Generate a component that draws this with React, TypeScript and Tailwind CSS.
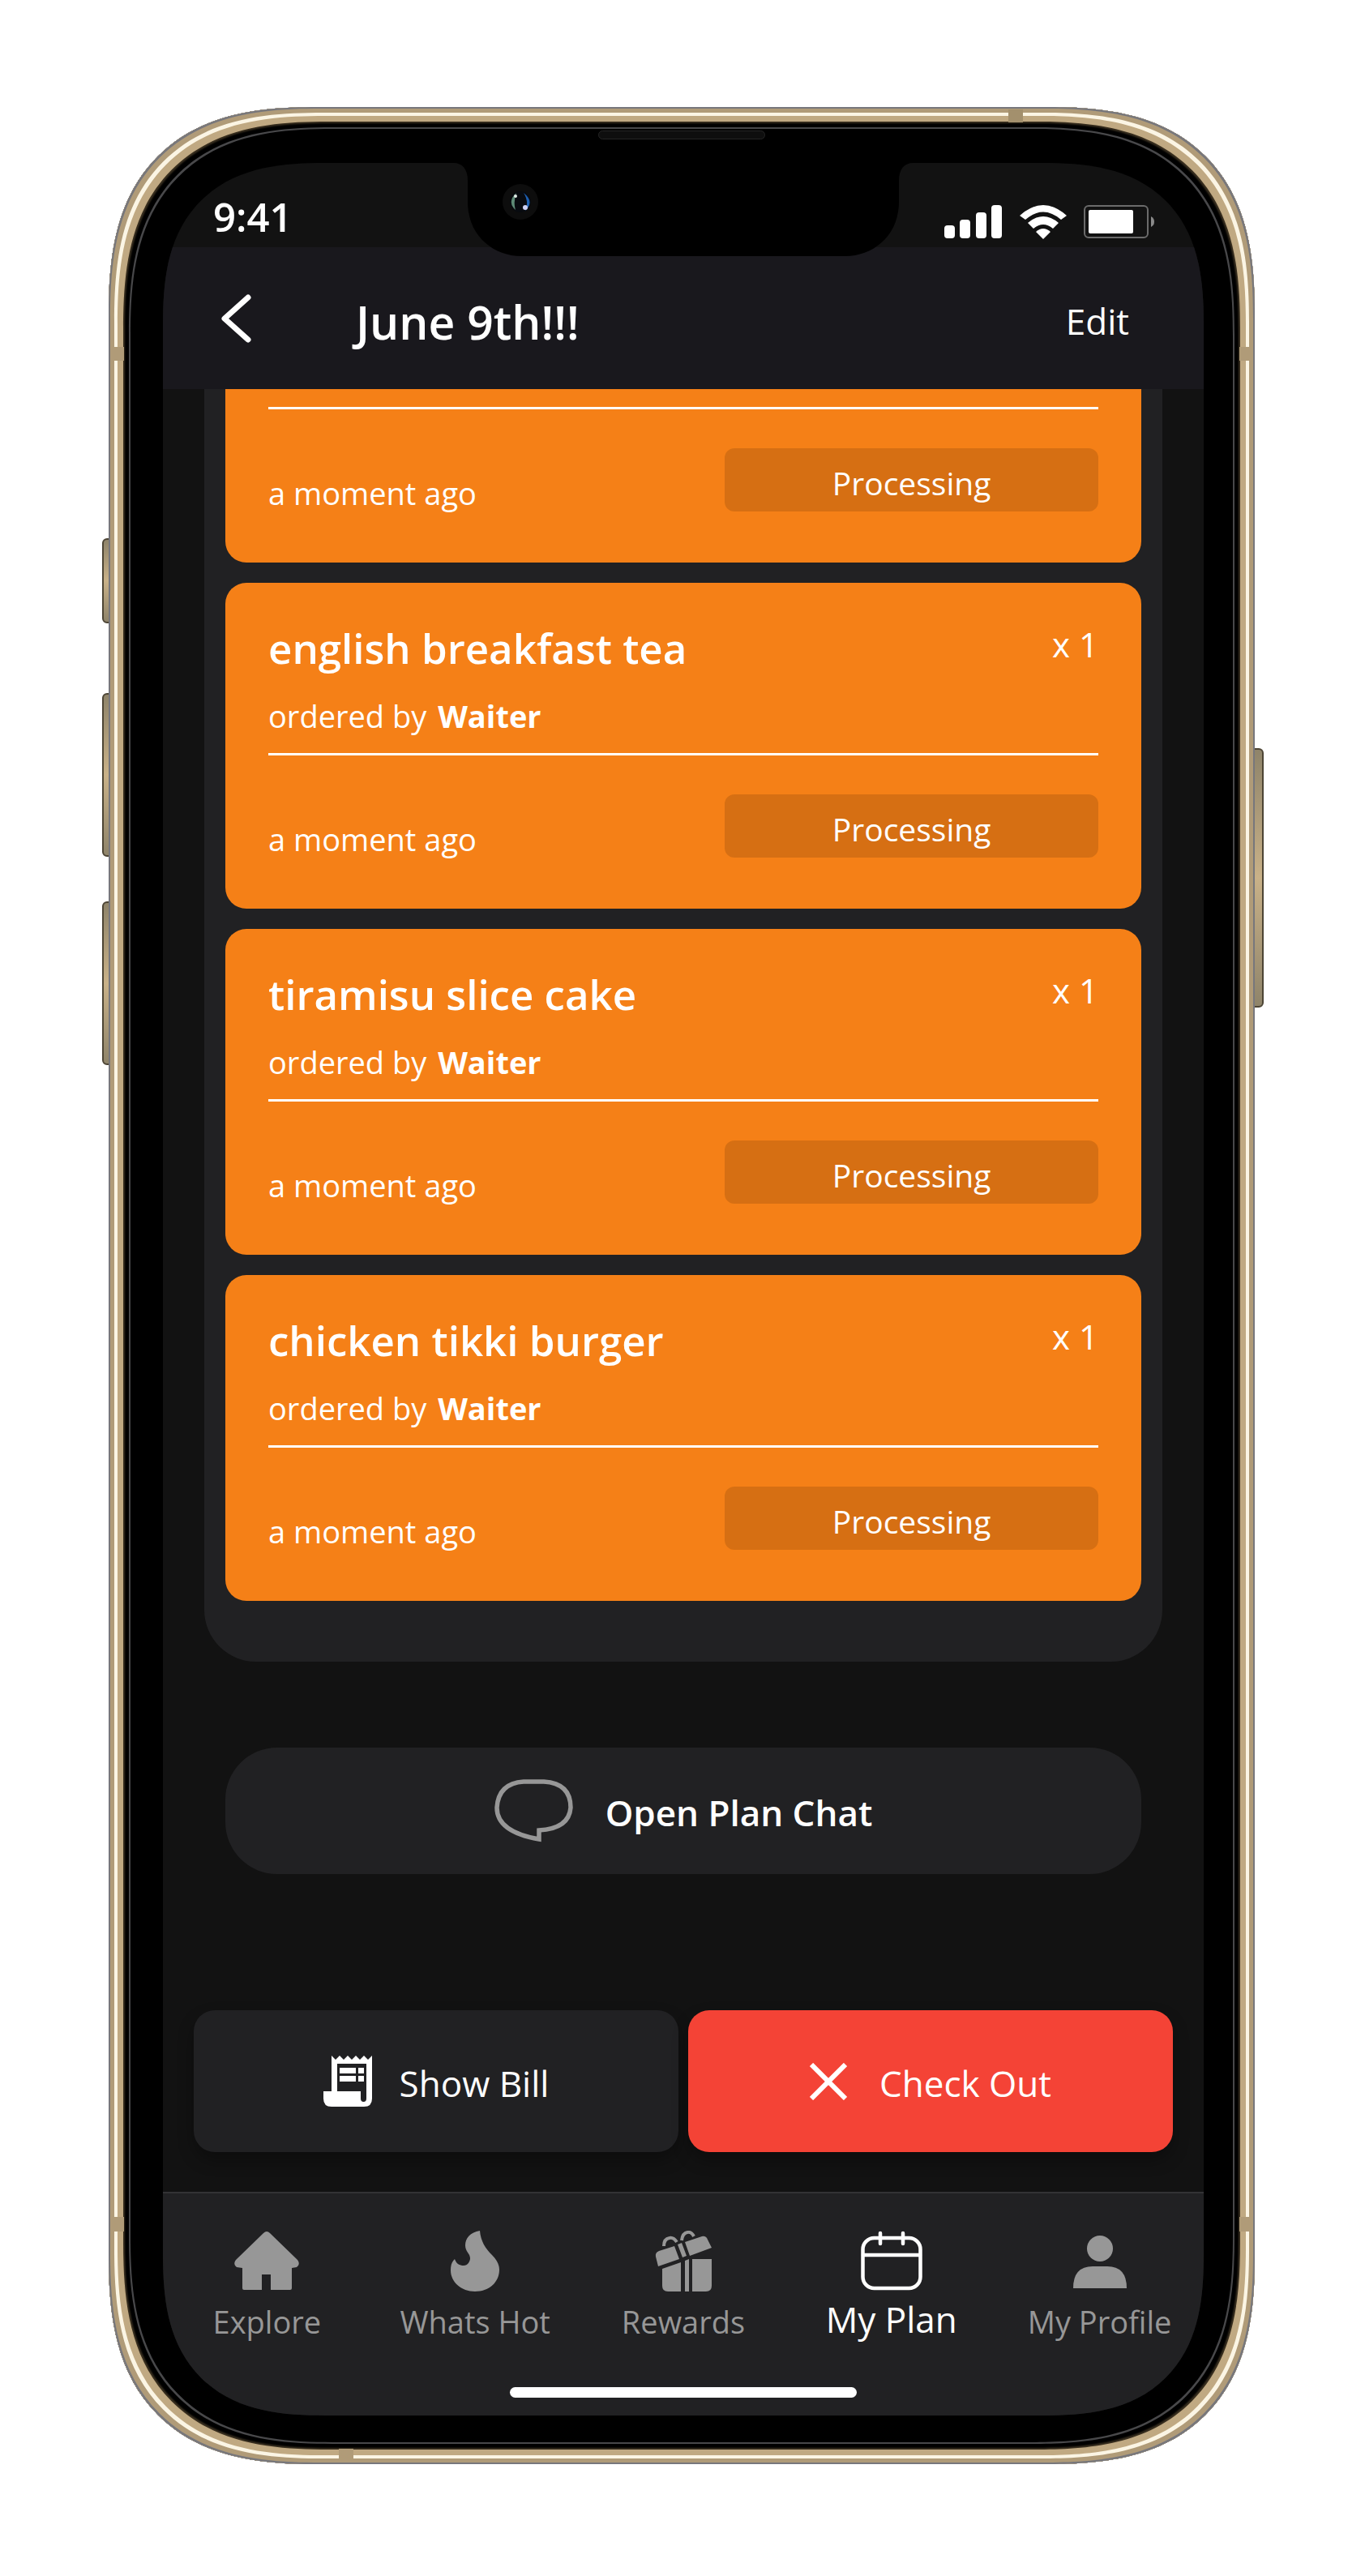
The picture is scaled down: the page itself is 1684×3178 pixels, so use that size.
import React from "react";

type Order = { name?: string; qty?: number; by?: string; time: string; status: string };

const orders: Order[] = [
  { time: "a moment ago", status: "Processing" },
  { name: "english breakfast tea", qty: 1, by: "Waiter", time: "a moment ago", status: "Processing" },
  { name: "tiramisu slice cake", qty: 1, by: "Waiter", time: "a moment ago", status: "Processing" },
  { name: "chicken tikki burger", qty: 1, by: "Waiter", time: "a moment ago", status: "Processing" },
];

function StatusIcons() {
  return (
    <svg width="260" height="44" viewBox="1165 252 260 44" aria-hidden="true">
      <g fill="#fff">
        <rect x="1165" y="278" width="13" height="16" rx="4" />
        <rect x="1184" y="271" width="13" height="23" rx="4" />
        <rect x="1204" y="262" width="13" height="32" rx="4" />
        <rect x="1223" y="253" width="13" height="41" rx="4" />
        <path d="M1258 266 Q1287 240 1316 266 L1309 271 Q1287 252 1265 271 Z" />
        <path d="M1268 275 Q1287 259 1306 275 L1299 282 Q1287 272 1275 282 Z" />
        <path d="M1278 286 Q1287 278 1296 286 L1287 295 Z" />
        <rect x="1343" y="259" width="55" height="29" rx="2" />
      </g>
      <rect x="1338" y="254" width="78" height="39" rx="5" fill="none" stroke="#6b6b6b" strokeWidth="2" />
      <path d="M1420 267 Q1424 269 1424 273.500 Q1424 278 1420 280 Z" fill="#8a8a8a" />
    </svg>
  );
}

function ChatIcon() {
  return (
    <svg width="97" height="80" viewBox="0 0 97 80" fill="none" stroke="#979797" strokeWidth="5.500" aria-hidden="true">
      <path d="M36 4 H61 Q94 6 94 36 Q92 62 55 64 V75 Q3 66 3 36 Q5 6 36 4 Z" />
    </svg>
  );
}

function BillIcon() {
  return (
    <svg width="60" height="64" viewBox="0 0 60 64" aria-hidden="true">
      <path
        fill="#fff"
        fillRule="evenodd"
        d="M10 0 L15 5 L20 0 L25 5 L30 0 L35 5 L40 0 L45 5 L50 0 L55 5 L60 0 V53 Q60 63 50 63 H10 Q0 63 0 53 V44 H10 Z M17 10 V44 H46 V53 Q46 57 49.500 57 Q53 57 53 53 V10 Z"
      />
      <path fill="#fff" d="M20 15 H40 V22 H20 Z M43 15 H50 V22 H43 Z M20 25 H40 V32 H20 Z M43 25 H50 V32 H43 Z" />
    </svg>
  );
}

function CloseIcon() {
  return (
    <svg width="46" height="46" viewBox="0 0 46 46" stroke="#fff" strokeWidth="6" aria-hidden="true">
      <path d="M2 2 L44 44 M44 2 L2 44" />
    </svg>
  );
}

function HomeIcon() {
  return (
    <svg width="80" height="76" viewBox="0 0 80 76" fill="#979797" aria-hidden="true">
      <path d="M36 3 Q40 -1 44 3 L78 36 Q82 41 77 45 L71 46 V71 Q71 73 69 73 H45 V54 H34 V73 H12 Q10 73 10 71 V46 L3 45 Q-2 41 2 36 Z" />
    </svg>
  );
}

function FlameIcon() {
  return (
    <svg width="60" height="76" viewBox="0 0 60 76" fill="#979797" aria-hidden="true">
      <path d="M36 0 C37 13 43 22 51 30 C57 36 60 42 60 48 C60 64 47 75 30 75 C13 75 0 63 0 49 C0 43 1 39 5 35 C7 41 11 43 16 43 C21 43 24 38 24 34 C24 28 18 26 18 18 C18 9 24 2 36 0 Z" />
    </svg>
  );
}

function GiftIcon() {
  return (
    <svg width="70" height="76" viewBox="0 0 70 76" fill="#979797" aria-hidden="true">
      <path d="M9 47 L32 39 V75 H16 Q9 75 9 68 Z M37 37 L42 35 V75 H37 Z M46 35 H70 V68 Q70 75 63 75 H46 Z" />
      <path d="M1 32 Q0 27 5 25 L24 19 L30 35 L4 44 Z M28 17 L33 15 L39 31 L34 33 Z M37 14 L58 7 Q63 6 65 11 L70 21 L43 31 Z" />
      <path d="M11 19 Q11 10 18 9 Q23 8 27 14 M33 12 Q34 3 40 2 Q45 1 48 7" fill="none" stroke="#979797" strokeWidth="4" />
    </svg>
  );
}

function CalendarIcon() {
  return (
    <svg width="76" height="76" viewBox="0 0 76 76" fill="none" stroke="#fff" strokeWidth="4.500" strokeLinecap="round" aria-hidden="true">
      <rect x="2.500" y="9" width="71" height="62" rx="14" />
      <path d="M3 30 H73 M24 3 V16 M52 3 V16" />
    </svg>
  );
}

function ProfileIcon() {
  return (
    <svg width="66" height="76" viewBox="0 0 66 76" fill="#979797" aria-hidden="true">
      <circle cx="33" cy="22" r="16" />
      <path d="M0 71 Q0 44 24 44 H42 Q66 44 66 71 Z" />
    </svg>
  );
}

const tabs = [
  { label: "Explore", Icon: HomeIcon },
  { label: "Whats Hot", Icon: FlameIcon },
  { label: "Rewards", Icon: GiftIcon },
  { label: "My Plan", Icon: CalendarIcon, active: true },
  { label: "My Profile", Icon: ProfileIcon },
];

function OrderCard({ order }: { order: Order }) {
  return (
    <li className={`bg-[#f58017] px-[53px] pb-[63px] ${order.name ? "rounded-[26px] pt-11" : "rounded-b-[26px] pt-[22px]"}`}>
      {order.name && (
        <div className="mb-[22px]">
          <div className="flex items-start justify-between leading-[64px]">
            <h2 className="pt-1 text-[51px] font-semibold">{order.name}</h2>
            <span className="text-[42px]">x {order.qty}</span>
          </div>
          <p className="mt-7 text-[38px] leading-[48px]">
            ordered by <strong className="ml-1 font-bold">{order.by}</strong>
          </p>
        </div>
      )}
      <div className="flex items-end justify-between border-t-[3px] border-white pt-12 text-[38px] leading-[46px]">
        <span>{order.time}</span>
        <span className="flex h-[78px] w-[45%] items-center justify-center rounded-xl bg-[#d66f13] pt-2 text-[39px]">{order.status}</span>
      </div>
    </li>
  );
}

function SideButton({ className }: { className: string }) {
  return <div className={`absolute border-2 border-[#4d4535] bg-linear-to-b from-[#8f846a] via-[#c9b188] to-[#8f846a] ${className}`} />;
}

export default function App() {
  return (
    <div className="bg-white pt-[132px] pr-[136px] pb-[138px] pl-[134px] font-['Open_Sans',sans-serif] text-white">
      <div className="relative">
        <SideButton className="top-[532px] -left-2 h-[105px] w-5 rounded-l-md" />
        <SideButton className="top-[723px] -left-2 h-[202px] w-5 rounded-l-md" />
        <SideButton className="top-[980px] -left-2 h-[202px] w-5 rounded-l-md" />
        <SideButton className="top-[791px] -right-[11px] h-[320px] w-5 rounded-r-md" />

        <div className="relative rounded-[212px] bg-black pt-[69px] pr-[63px] pb-[60px] pl-[67px] shadow-[inset_0_0_0_2px_#77777c,inset_0_0_0_7px_#b09b78,inset_0_0_0_11px_#fbf5e4,inset_0_0_0_18px_#c0a982,inset_0_0_2px_20px_#3a3020,inset_0_0_0_25px_#000000,inset_0_0_0_27px_#48484a] supports-[corner-shape:squircle]:rounded-[260px] supports-[corner-shape:squircle]:[corner-shape:superellipse(1.38)]">
          <div className="absolute top-[296px] left-[3px] h-[17px] w-4 bg-[#b09b78]" />
          <div className="absolute top-[296px] right-[3px] h-[17px] w-4 bg-[#b09b78]" />
          <div className="absolute bottom-[287px] left-[3px] h-[18px] w-4 bg-[#b09b78]" />
          <div className="absolute right-[3px] bottom-[287px] h-[18px] w-4 bg-[#b09b78]" />
          <div className="absolute top-[3px] right-[286px] h-4 w-[18px] bg-[#a3906d]" />
          <div className="absolute bottom-[3px] left-[284px] h-4 w-[18px] bg-[#b09b78]" />
          <div className="absolute top-[29px] left-1/2 h-[11px] w-[206px] -translate-x-1/2 rounded-full border border-[#252525] bg-[#0e0e0e]" />

          <div className="relative overflow-hidden rounded-[160px] bg-[#121212] supports-[corner-shape:squircle]:rounded-[200px] supports-[corner-shape:squircle]:[corner-shape:superellipse(1.38)]">
            <div className="absolute top-0 left-1/2 -translate-x-1/2">
              <svg width="568" height="116" viewBox="0 0 568 116" aria-hidden="true">
                <path d="M0 0 C12 0 18 8 18 22 V48 C18 90 50 115 84 115 H484 C518 115 550 90 550 48 V22 C550 8 556 0 568 0 Z" fill="#000" />
                <circle cx="83" cy="48" r="22" fill="#0d0d0d" />
                <circle cx="83" cy="48" r="13" fill="#080b10" />
                <path d="M78 37 Q66 48 77 58 Q74 48 78 37 Z" fill="#5d8a76" />
                <path d="M87 37 Q101 48 89 59 Q94 48 87 37 Z" fill="#1d5fb0" />
                <circle cx="77" cy="41" r="2" fill="#dfe9e4" />
                <circle cx="89" cy="55" r="3" fill="#cfd3f5" />
              </svg>
            </div>

            <div className="flex h-[104px] items-center justify-between pt-[27px] pr-[60px] pl-[62px]">
              <time className="text-[49px] leading-[52px] font-semibold">9:41</time>
              <div className="pt-3.5"><StatusIcons /></div>
            </div>

            <header className="flex h-[175px] items-center bg-[#19181d] pr-[92px] pl-[72px]">
              <button type="button" aria-label="Back">
                <svg width="38" height="60" viewBox="0 0 38 60" fill="none" stroke="#fff" strokeWidth="7" strokeLinecap="round" strokeLinejoin="round" aria-hidden="true">
                  <path d="M33 4 L4 30 L33 56" />
                </svg>
              </button>
              <h1 className="ml-[128px] pt-2 text-[57px] leading-[64px] font-semibold">June 9th!!!</h1>
              <button type="button" className="ml-auto pt-1.5 text-[44px] leading-[56px] font-medium">Edit</button>
            </header>

            <main className="px-[51px]">
              <ul className="flex flex-col gap-[25px] rounded-b-[64px] bg-[#212123] px-[26px] pb-[75px]">
                {orders.map((order, i) => (
                  <OrderCard key={i} order={order} />
                ))}
              </ul>
              <div className="px-[26px] pt-[106px]">
                <button type="button" className="flex h-[156px] w-full items-center justify-center gap-10 rounded-[64px] bg-[#212123] text-[44px] font-semibold">
                  <ChatIcon />
                  <span className="pt-1">Open Plan Chat</span>
                </button>
              </div>
            </main>

            <div className="grid grid-cols-2 gap-3 px-[38px] pt-[168px] pb-[49px] text-[44px] font-medium">
              <button type="button" className="flex h-[175px] items-center justify-center gap-[34px] rounded-[26px] bg-[#212123] shadow-[0_10px_20px_rgba(0,0,0,0.3)]">
                <BillIcon />
                <span className="pt-1">Show Bill</span>
              </button>
              <button type="button" className="flex h-[175px] items-center justify-center gap-10 rounded-[26px] bg-[#f44336] shadow-[0_10px_20px_rgba(0,0,0,0.3)]">
                <CloseIcon />
                <span className="pt-1">Check Out</span>
              </button>
            </div>

            <footer className="border-t-2 border-[#333335] bg-[#212123] pt-[46px] pb-[22px]">
              <nav className="grid grid-cols-5">
                {tabs.map(({ label, Icon, active }) => (
                  <a
                    key={label}
                    href="#"
                    aria-current={active ? "page" : undefined}
                    className={`flex flex-col items-center gap-2.5 whitespace-nowrap ${active ? "text-[44px] leading-[46px] text-white" : "text-[38px] leading-[52px] text-[#979797]"}`}
                  >
                    <Icon />
                    {label}
                  </a>
                ))}
              </nav>
              <div className="mx-auto mt-[55px] h-[13px] w-1/3 rounded-full bg-white" />
            </footer>
          </div>
        </div>
      </div>
    </div>
  );
}
